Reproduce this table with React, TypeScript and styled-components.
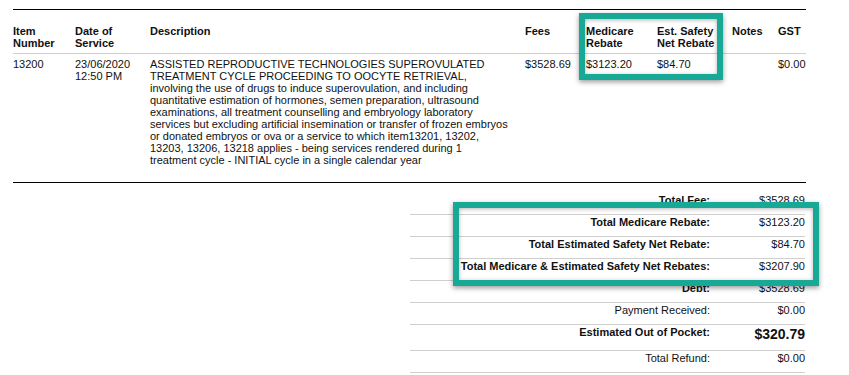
import React from "react";
import styled, { createGlobalStyle } from "styled-components";

const GlobalStyle = createGlobalStyle`
  body {
    margin: 0;
    background: #fff;
    font-family: "Liberation Sans", Arial, sans-serif;
    color: #111;
  }
`;

const COLUMNS = "62px 75px 375px 61px 71px 75px 46px 28px";
const TEAL = "#17a996";

const Page = styled.div`
  width: 793px;
  padding: 9px 0 0 13px;
  font-size: 11px;
  line-height: 12px;
`;

const Table = styled.div`
  position: relative;
  border-top: 1px solid #000;
  border-bottom: 1px solid #000;
`;

const Row = styled.div<{ head?: boolean }>`
  display: grid;
  grid-template-columns: ${COLUMNS};
  padding: ${({ head }) => (head ? "15px 0 4px" : "4px 0 16px")};
  border-bottom: ${({ head }) => (head ? "1px solid #cfcfcf" : "none")};
  font-weight: ${({ head }) => (head ? "bold" : "normal")};
`;

const Cell = styled.div`
  white-space: nowrap;
`;

const Highlight = styled.div<{ left: number; top: number; width: number; height: number }>`
  position: absolute;
  left: ${({ left }) => left}px;
  top: ${({ top }) => top}px;
  width: ${({ width }) => width}px;
  height: ${({ height }) => height}px;
  box-sizing: border-box;
  border: 6px solid ${TEAL};
  box-shadow: 0 2px 5px rgba(0, 0, 0, 0.4), inset 0 1px 4px rgba(0, 0, 0, 0.3);
  pointer-events: none;
`;

const Summary = styled.div`
  position: relative;
  width: 395px;
  margin: 10px 1px 0 auto;
`;

const SumRow = styled.div`
  display: grid;
  grid-template-columns: 1fr 85px;
  border-bottom: 1px solid #cfcfcf;
`;

const SumLabel = styled.div<{ bold?: boolean }>`
  padding: 1px 10px 8px 0;
  text-align: right;
  font-weight: ${({ bold }) => (bold ? "bold" : "normal")};
`;

const SumValue = styled.div<{ big?: boolean }>`
  padding: 1px 0 8px;
  text-align: right;
  font-size: ${({ big }) => (big ? "14px" : "inherit")};
  line-height: ${({ big }) => (big ? "16px" : "12px")};
  font-weight: ${({ big }) => (big ? "bold" : "normal")};
`;

const description = [
  "ASSISTED REPRODUCTIVE TECHNOLOGIES SUPEROVULATED",
  "TREATMENT CYCLE PROCEEDING TO OOCYTE RETRIEVAL,",
  "involving the use of drugs to induce superovulation, and including",
  "quantitative estimation of hormones, semen preparation, ultrasound",
  "examinations, all treatment counselling and embryology laboratory",
  "services but excluding artificial insemination or transfer of frozen embryos",
  "or donated embryos or ova or a service to which item13201, 13202,",
  "13203, 13206, 13218 applies - being services rendered during 1",
  "treatment cycle - INITIAL cycle in a single calendar year",
];

const totals = [
  { label: "Total Fee:", value: "$3528.69", bold: true },
  { label: "Total Medicare Rebate:", value: "$3123.20", bold: true },
  { label: "Total Estimated Safety Net Rebate:", value: "$84.70", bold: true },
  { label: "Total Medicare & Estimated Safety Net Rebates:", value: "$3207.90", bold: true },
  { label: "Debt:", value: "$3528.69", bold: true },
  { label: "Payment Received:", value: "$0.00" },
  { label: "Estimated Out of Pocket:", value: "$320.79", bold: true, big: true },
  { label: "Total Refund:", value: "$0.00" },
];

const App: React.FC = () => {
  return (
    <Page>
      <GlobalStyle />
      <Table>
        <Row head>
          <Cell>Item<br />Number</Cell>
          <Cell>Date of<br />Service</Cell>
          <Cell>Description</Cell>
          <Cell>Fees</Cell>
          <Cell>Medicare<br />Rebate</Cell>
          <Cell>Est. Safety<br />Net Rebate</Cell>
          <Cell>Notes</Cell>
          <Cell>GST</Cell>
        </Row>
        <Row>
          <Cell>13200</Cell>
          <Cell>23/06/2020<br />12:50 PM</Cell>
          <Cell>
            {description.map((line, i) => (
              <React.Fragment key={i}>
                {line}
                {i < description.length - 1 && <br />}
              </React.Fragment>
            ))}
          </Cell>
          <Cell>$3528.69</Cell>
          <Cell>$3123.20</Cell>
          <Cell>$84.70</Cell>
          <Cell />
          <Cell>$0.00</Cell>
        </Row>
        <Highlight left={566} top={3} width={144} height={67} />
      </Table>
      <Summary>
        {totals.map((t) => (
          <SumRow key={t.label}>
            <SumLabel bold={t.bold}>{t.label}</SumLabel>
            <SumValue big={t.big}>{t.value}</SumValue>
          </SumRow>
        ))}
        <Highlight left={43} top={9} width={366} height={84} />
      </Summary>
    </Page>
  );
};

export default App;
